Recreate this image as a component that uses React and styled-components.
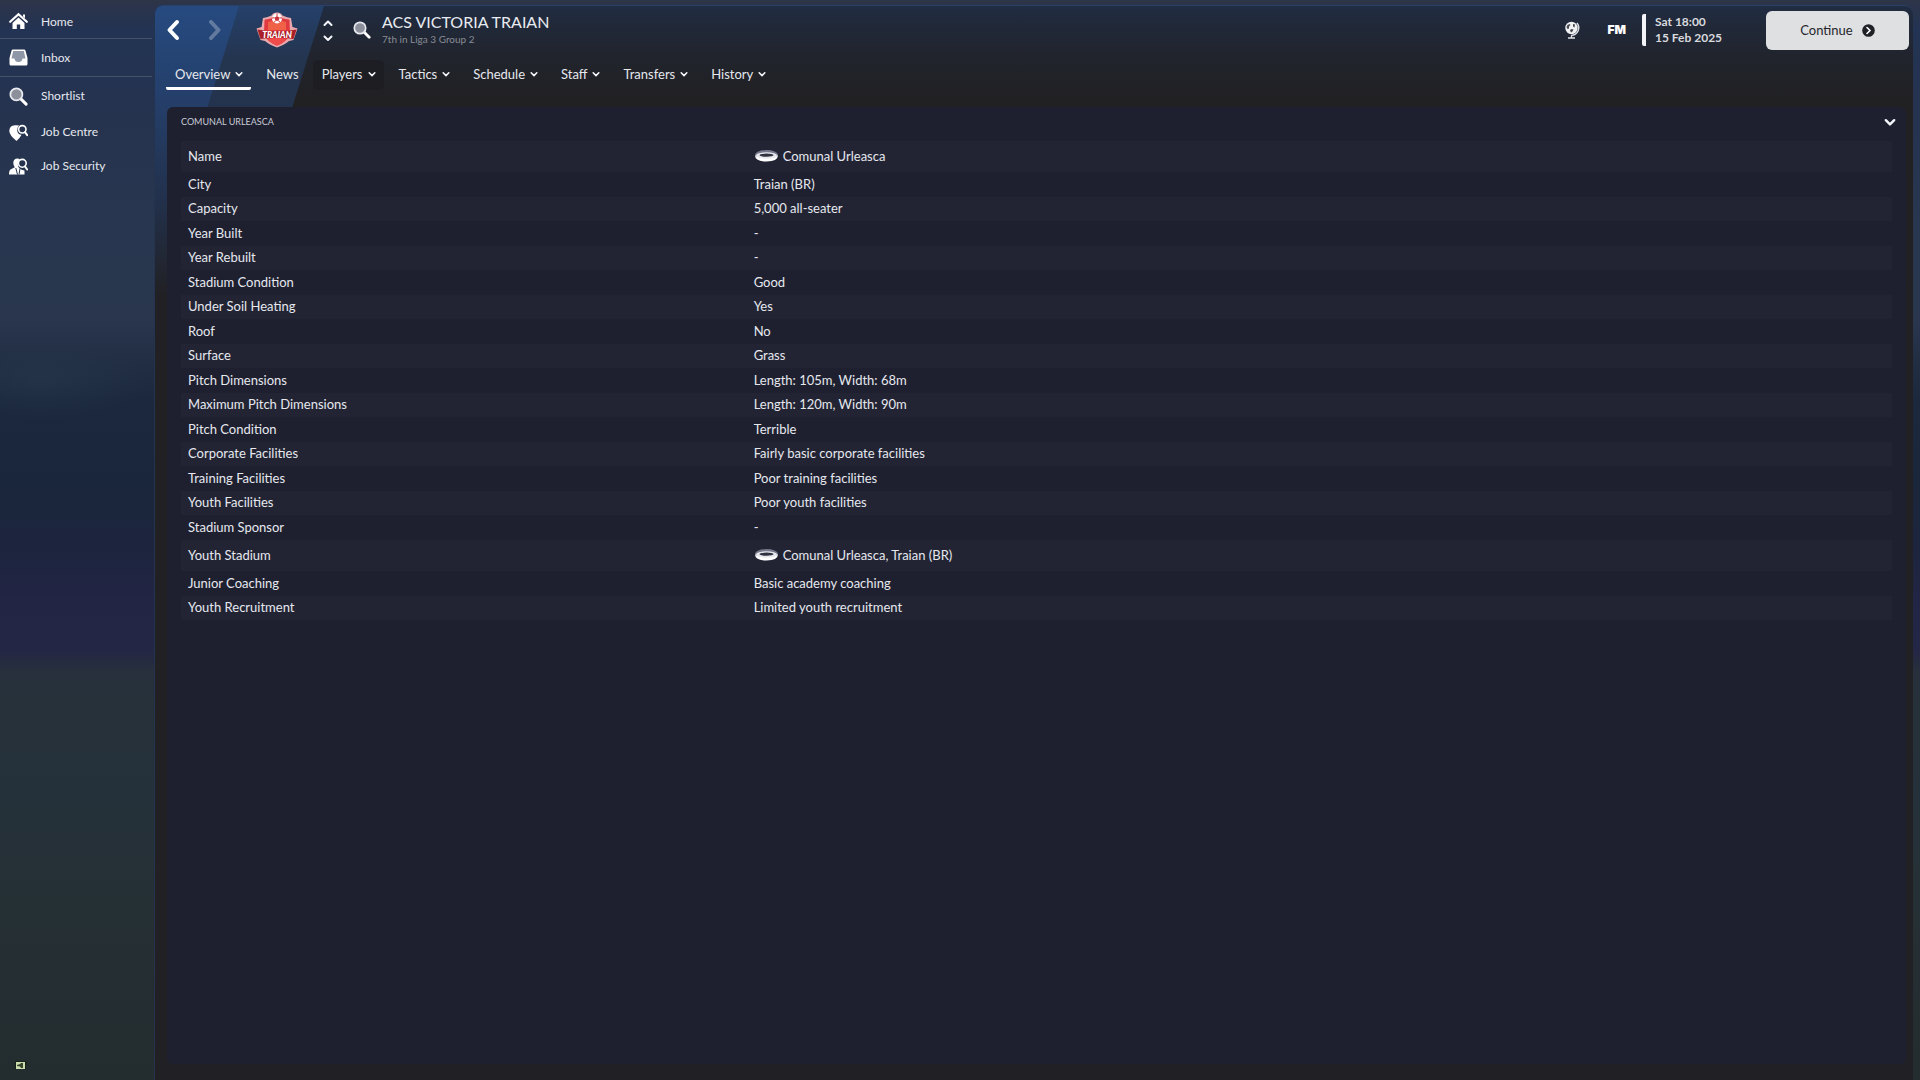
import React from "react";
import styled, { createGlobalStyle, css } from "styled-components";

const GlobalStyle = createGlobalStyle`
  * { box-sizing: border-box; }
  body { margin: 0; background: #232b2f; }
  button { font: inherit; color: inherit; background: none; border: 0; padding: 0; cursor: pointer; }
  a { color: inherit; text-decoration: none; }
  svg { display: block; flex: none; }
`;

const Screen = styled.div`
  display: flex;
  min-height: 100vh;
  padding: 5px 7px 0 0;
  font-family: Lato, "Open Sans", sans-serif;
  font-size: 13px;
  line-height: 16px;
  color: #e6e8ee;
  background:
    radial-gradient(ellipse 110px 40px at 40px 380px, rgba(42, 58, 78, 0.5), transparent),
    linear-gradient(180deg, #2e3548 0, #2b344b 6px, #233353 30px, #25334f 120px, #28364f 230px, #29364e 320px,
      #222f45 355px, #1b283e 400px, #1a263c 480px, #1c253d 540px, #222544 600px, #242645 650px, #27303c 672px,
      #26313a 700px, #25313a 800px, #252f33 950px, #232c2f 1080px);
`;

const Sidebar = styled.nav`
  flex: none;
  display: flex;
  flex-direction: column;
  justify-content: space-between;
  width: 154px;
  padding: 0 2px 9px 0;
`;

const SideList = styled.ul`
  margin: 0;
  padding: 0;
  list-style: none;
  font-size: 12px;
`;

const SideItem = styled.li`
  height: ${(p) => (p.$tall ? 38 : 34)}px;
  ${(p) => p.$ruled && css`border-bottom: 1px solid #46526c;`}
`;

const SideLink = styled.a`
  display: flex;
  align-items: center;
  gap: 13px;
  height: 100%;
  padding-left: 9px;
  svg { width: 19px; height: 19px; }
`;

const Notes = styled.button`
  margin-left: 15px;
  width: 12px;
  height: 10px;
`;

const Main = styled.main`
  flex: 1;
  display: flex;
  flex-direction: column;
  min-width: 0;
  padding: 0 7px 16px 12px;
  border-top: 1px solid #2a4167;
  border-left: 1px solid #24344f;
  border-radius: 9px 9px 0 0;
  background: linear-gradient(180deg, #202c41 0, #21242d 50px, #212124 90px, #212125 100%);
  position: relative;
  isolation: isolate;
`;

const Stripes = styled.svg`
  position: absolute;
  inset: 0 auto auto 0;
  z-index: -1;
  border-radius: 8px 0 0 0;
`;

const Header = styled.header`
  display: flex;
  align-items: center;
  height: 48px;
`;

const IconButton = styled.button`
  display: grid;
  place-items: center;
  width: 24px;
  height: 32px;
  opacity: ${(p) => (p.disabled ? 0.28 : 1)};
`;

const History = styled.div`
  display: flex;
  gap: 18px;
  margin-left: -6px;
`;

const Crest = styled.a`
  margin-left: 29px;
`;

const Switcher = styled.div`
  display: flex;
  flex-direction: column;
  gap: 2px;
  margin: 0 11px 0 19px;
`;

const StepButton = styled.button`
  display: grid;
  place-items: center;
  width: 22px;
  height: 13px;
`;

const Club = styled.div`
  flex: 1;
  margin-left: 8px;
`;

const ClubName = styled.h1`
  margin: 0;
  font-size: 16px;
  line-height: 18px;
  font-weight: 400;
  color: #e8ebf0;
`;

const ClubInfo = styled.p`
  margin: 0;
  font-size: 10px;
  line-height: 16px;
  color: #888c95;
`;

const Tools = styled.div`
  display: flex;
  align-items: center;
  gap: 12px;
`;

const FmLink = styled.a`
  padding: 0 4px 0 12px;
  font: 900 12px/16px Inter, sans-serif;
  color: #fff;
`;

const Clock = styled.time`
  display: block;
  width: 112px;
  padding-left: 9px;
  border-left: 4px solid #f2f4f8;
  border-radius: 2px;
  font-size: 12px;
  font-weight: 700;
  color: #d8dade;
`;

const Continue = styled.button`
  display: flex;
  align-items: center;
  justify-content: center;
  gap: 9px;
  width: 143px;
  height: 39px;
  margin-right: -3px;
  border-radius: 6px;
  background: #dfe0e2;
  color: #25262c;
  font-size: 13px;
`;

const Tabs = styled.nav`
  display: flex;
  gap: 6px;
  height: 53px;
  margin-left: -1px;
  padding-top: 6px;
`;

const Tab = styled.button`
  display: flex;
  align-items: center;
  gap: 5px;
  height: 30px;
  padding: 0 8px 0 9px;
  border-bottom: 3px solid ${(p) => (p.$active ? "#fff" : "transparent")};
  border-radius: 2px;
  ${(p) => p.$hover && css`background: rgba(27, 27, 32, 0.6); border-radius: 5px;`}
`;

const Panel = styled.section`
  flex: 1;
  padding: 0 14px;
  border-radius: 6px;
  background: #1e2030;
`;

const PanelHead = styled.div`
  display: flex;
  align-items: center;
  justify-content: space-between;
  height: 34px;
  padding-bottom: 4px;
`;

const PanelTitle = styled.h2`
  margin: 0;
  font-size: 9px;
  line-height: 12px;
  font-weight: 400;
  color: #c9ccd6;
`;

const Collapse = styled.button`
  margin-right: -4px;
`;

const Facts = styled.table`
  width: 100%;
  border-collapse: collapse;
  table-layout: fixed;
`;

const Row = styled.tr`
  height: ${(p) => (p.$tall ? 31 : 25)}px;
  &:nth-child(odd) { height: ${(p) => (p.$tall ? 31 : 24)}px; background: #222434; }
`;

const Label = styled.th`
  width: 33%;
  padding: 0 7px 2px;
  font-weight: 400;
  text-align: left;
`;

const Value = styled.td`
  padding: 0 8px 2px;
`;

const Ground = styled.a`
  display: flex;
  align-items: center;
  gap: 4px;
`;

const Chevron = ({ up, size = 8 }) => (
  <svg width={size} height={size} viewBox="0 0 10 10" fill="none" stroke="#f4f6fa" strokeWidth="2" strokeLinecap="round" strokeLinejoin="round">
    <path d={up ? "M1.5 7 5 3.5 8.5 7" : "M1.5 3.5 5 7 8.5 3.5"} />
  </svg>
);

const Arrow = ({ right }) => (
  <svg width="14" height="22" viewBox="0 0 14 22" fill="none" stroke="#fff" strokeWidth="4" strokeLinecap="round" strokeLinejoin="round">
    <path d={right ? "M3 3l7.5 8L3 19" : "M11 3L3.500 11l7.500 8"} />
  </svg>
);

const Search = () => (
  <svg width="18" height="18" viewBox="0 0 18 18">
    <path d="M11 11l5.200 5.200" stroke="#fff" strokeWidth="2.800" strokeLinecap="round" />
    <circle cx="7" cy="7" r="5.700" fill="#8b909b" stroke="#e8eaf0" strokeWidth="1.700" />
  </svg>
);

const HomeIcon = () => (
  <svg viewBox="0 0 19 19">
    <path d="M1.200 9.800 9.500 2.300l8.300 7.500" fill="none" stroke="#fff" strokeWidth="2.200" strokeLinecap="round" />
    <path d="M9.500 5.500 3.500 11v6h4.300v-4.500h3.400V17h4.300v-6z" fill="#fff" />
    <path d="M14 2.500h2v3.800l-2-1.800z" fill="#fff" />
  </svg>
);

const InboxIcon = () => (
  <svg viewBox="0 0 19 19">
    <path d="M4 1.500h11q1.200 0 1.500 1.200L18.500 10v6q0 1.500-1.500 1.500H2Q.5 17.500.5 16v-6l2-7.300Q2.800 1.500 4 1.500z" fill="#fff" />
    <path d="M4.200 3h10.600l1.700 7.500h-3q-.4 3.500-4 3.500t-4-3.500h-3z" fill="#8e97a8" />
  </svg>
);

const CentreIcon = () => (
  <svg viewBox="0 0 19 19">
    <path d="M6 2.200Q.3 2.500.3 8q0 4 7.200 10 3.800-3.400 5-6.200Q8.500 11.500 8.200 7.200 8.300 4 10.200 2.600 8.200 2 6 2.200z" fill="#fff" />
    <circle cx="13.300" cy="6.300" r="3.700" fill="none" stroke="#fff" strokeWidth="1.600" />
    <path d="M16 9.200l2.200 3" stroke="#fff" strokeWidth="2" strokeLinecap="round" />
  </svg>
);

const SecurityIcon = () => (
  <svg viewBox="0 0 19 19">
    <path d="M8.500 1.500Q4.300 1.500 4.300 6q0 2.700 1.500 4.300L1.500 12.500Q0 13.500 0 17.500h15.500v-4Q9 12.500 8.800 7.300 9 3.500 11 2.200 10 1.500 8.500 1.500z" fill="#fff" />
    <path d="M6.800 11l1.700 6.500M11 11.500l-1 6" stroke="#25334f" strokeWidth="1" />
    <circle cx="13.300" cy="6.300" r="3.900" fill="#25334f" stroke="#fff" strokeWidth="1.600" />
    <path d="M16 9.500l2.200 3" stroke="#fff" strokeWidth="2" strokeLinecap="round" />
  </svg>
);

const CrestIcon = () => (
  <svg width="42" height="36" viewBox="0 0 42 36" role="img" aria-label="ACS Victoria Traian">
    <path d="M21 .5q4 0 5.500 3 5 2 8.500 2.500l1.500 9 5 1.500-4 11.500-4.500 1Q29 32.500 21 35.500 13 32.500 9 29l-4.500-1-4-11.500 5-1.500L7 6q3.500-.5 8.500-2.500Q17 .5 21 .5z" fill="#eaa9ac" />
    <path d="M21 3l4 3 8.500 1.800L34 22q-3 8-13 11.700Q11 30 8 22l.5-14.200L17 6z" fill="#e03a40" />
    <path d="M12 10l9-2 9 2v8H12z" fill="#ef6248" />
    <path d="M12 27.500q9-3 18 0-3 3.500-9 6-6-2.500-9-6z" fill="#f04b4b" />
    <path d="M1.500 17.500q19.500 4 39 0L37.500 27q-16.500-3-33 0z" fill="#a81f28" />
    <text x="21" y="26" textAnchor="middle" fontFamily="Lato, sans-serif" fontWeight="900" fontStyle="italic" fontSize="8.500" fill="#fff">TRAIAN</text>
    <circle cx="21" cy="6.500" r="5" fill="#fff" />
    <path d="M21 4l2.500 1.800-1 2.900h-3l-1-2.900z" fill="#cc3038" />
    <path d="M21 1.500V4M26 6l-2.500-.2M24 10.500l-1.500-1.800M18 10.500l1.500-1.800M16 6l2.500-.2" stroke="#cc3038" strokeWidth="1" />
  </svg>
);

const GlobeIcon = () => (
  <svg width="18" height="18" viewBox="0 0 18 18">
    <circle cx="8.500" cy="7" r="6.200" fill="#f0f2f4" />
    <path d="M4.500 4l2-1 1 1-1.500 1.500v2l-1.500.5-1-2zM10 3l2 .5-.5 3-1.500-1zM8 8l2.500.5-1 2L8 11.500l-1-2z" fill="#44484f" />
    <path d="M14 2a7.500 7.500 0 0 1-5.500 12.300M8.500 14v2.500M5 17h7" fill="none" stroke="#e0e2e6" strokeWidth="1.300" />
  </svg>
);

const ContinueIcon = () => (
  <svg width="13" height="13" viewBox="0 0 13 13">
    <circle cx="6.500" cy="6.500" r="6.300" fill="#202127" />
    <path d="M5 3.500l3 3-3 3" fill="none" stroke="#fff" strokeWidth="1.600" strokeLinecap="round" />
  </svg>
);

const StadiumIcon = () => (
  <svg width="25" height="14" viewBox="0 0 25 14">
    <ellipse cx="12.500" cy="6" rx="11.500" ry="5" fill="#77798c" />
    <path d="M1 6q0 6.500 11.500 6.500T24 6q-2 3-11.500 3T1 6z" fill="#fff" />
    <ellipse cx="12.500" cy="6.500" rx="10.500" ry="3.200" fill="#e8e9ee" />
    <ellipse cx="12.500" cy="6.200" rx="7" ry="1.600" fill="#30323f" />
  </svg>
);

const NoteIcon = () => (
  <svg width="12" height="10" viewBox="0 0 12 10">
    <path d="M0 0h11l1 2v2h-1v4H0z" fill="#172019" />
    <path d="M1 1h9v7H1z" fill="#cbdcae" />
    <path d="M2 4l3-1 1-1h2v5H6L5 5.500 2 5z" fill="#39452f" />
  </svg>
);

const sideItems = [
  { text: "Home", Icon: HomeIcon, ruled: true },
  { text: "Inbox", Icon: InboxIcon, ruled: true, tall: true },
  { text: "Shortlist", Icon: Search, tall: true },
  { text: "Job Centre", Icon: CentreIcon },
  { text: "Job Security", Icon: SecurityIcon },
];

const tabs = ["Overview", "News", "Players", "Tactics", "Schedule", "Staff", "Transfers", "History"];

const facts = [
  ["Name", "Comunal Urleasca", true],
  ["City", "Traian (BR)"],
  ["Capacity", "5,000 all-seater"],
  ["Year Built", "-"],
  ["Year Rebuilt", "-"],
  ["Stadium Condition", "Good"],
  ["Under Soil Heating", "Yes"],
  ["Roof", "No"],
  ["Surface", "Grass"],
  ["Pitch Dimensions", "Length: 105m, Width: 68m"],
  ["Maximum Pitch Dimensions", "Length: 120m, Width: 90m"],
  ["Pitch Condition", "Terrible"],
  ["Corporate Facilities", "Fairly basic corporate facilities"],
  ["Training Facilities", "Poor training facilities"],
  ["Youth Facilities", "Poor youth facilities"],
  ["Stadium Sponsor", "-"],
  ["Youth Stadium", "Comunal Urleasca, Traian (BR)", true],
  ["Junior Coaching", "Basic academy coaching"],
  ["Youth Recruitment", "Limited youth recruitment"],
];

export default function App() {
  return (
    <>
      <GlobalStyle />
      <Screen>
        <Sidebar>
          <SideList>
            {sideItems.map(({ text, Icon, ruled, tall }) => (
              <SideItem key={text} $ruled={ruled} $tall={tall}>
                <SideLink href="#"><Icon />{text}</SideLink>
              </SideItem>
            ))}
          </SideList>
          <Notes aria-label="Notes"><NoteIcon /></Notes>
        </Sidebar>
        <Main>
          <Stripes width="180" height="360" viewBox="0 0 180 360" aria-hidden="true">
            <defs>
              <linearGradient id="bright" x1="0" y1="0" x2="0" y2="1">
                <stop offset="0" stopColor="#264a80" />
                <stop offset="0.3" stopColor="#243d66" />
                <stop offset="0.55" stopColor="#22304a" />
                <stop offset="0.8" stopColor="#212125" />
              </linearGradient>
              <linearGradient id="dim" x1="0" y1="0" x2="0" y2="1">
                <stop offset="0" stopColor="#25406a" />
                <stop offset="0.5" stopColor="#243550" />
                <stop offset="1" stopColor="#24334d" />
              </linearGradient>
            </defs>
            <path d="M0 0H169L137 102H0z" fill="url(#dim)" />
            <path d="M0 0H84L52 102 12 230V360H0z" fill="url(#bright)" />
          </Stripes>
          <Header>
            <History>
              <IconButton aria-label="Back"><Arrow /></IconButton>
              <IconButton aria-label="Forward" disabled><Arrow right /></IconButton>
            </History>
            <Crest href="#"><CrestIcon /></Crest>
            <Switcher>
              <StepButton aria-label="Previous club"><Chevron up size={10} /></StepButton>
              <StepButton aria-label="Next club"><Chevron size={10} /></StepButton>
            </Switcher>
            <IconButton aria-label="Search"><Search /></IconButton>
            <Club>
              <ClubName>ACS VICTORIA TRAIAN</ClubName>
              <ClubInfo>7th in Liga 3 Group 2</ClubInfo>
            </Club>
            <Tools>
              <IconButton aria-label="World"><GlobeIcon /></IconButton>
              <FmLink href="#">FM</FmLink>
              <Clock dateTime="2025-02-15T18:00">Sat 18:00<br />15 Feb 2025</Clock>
              <Continue>Continue<ContinueIcon /></Continue>
            </Tools>
          </Header>
          <Tabs>
            {tabs.map((t) => (
              <Tab key={t} $active={t === "Overview"} $hover={t === "Players"}>
                {t}{t !== "News" && <Chevron />}
              </Tab>
            ))}
          </Tabs>
          <Panel>
            <PanelHead>
              <PanelTitle>COMUNAL URLEASCA</PanelTitle>
              <Collapse aria-label="Collapse"><Chevron size={12} /></Collapse>
            </PanelHead>
            <Facts>
              <tbody>
                {facts.map(([label, value, ground]) => (
                  <Row key={label} $tall={ground}>
                    <Label scope="row">{label}</Label>
                    <Value>{ground ? <Ground href="#"><StadiumIcon />{value}</Ground> : value}</Value>
                  </Row>
                ))}
              </tbody>
            </Facts>
          </Panel>
        </Main>
      </Screen>
    </>
  );
}
